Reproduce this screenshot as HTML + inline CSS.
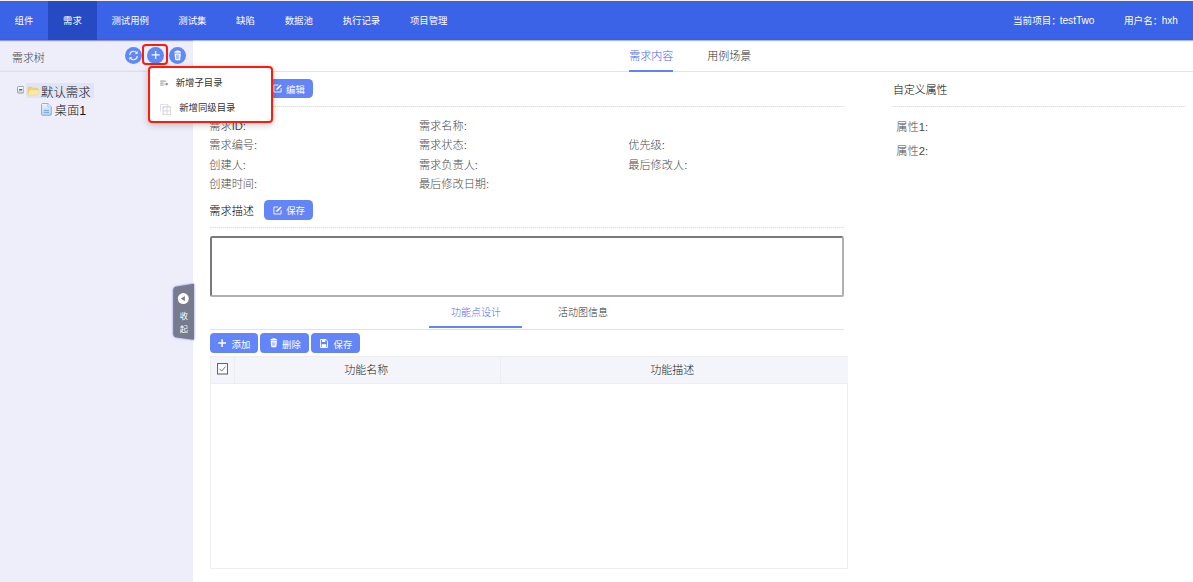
<!DOCTYPE html>
<html lang="zh-CN">
<head>
<meta charset="utf-8">
<title>需求</title>
<style>
*{box-sizing:border-box;margin:0;padding:0}
html,body{width:1193px;height:582px;overflow:hidden;background:#fff}
body{font-family:"Liberation Sans","Noto Sans CJK SC",sans-serif;color:#333;position:relative}
.abs{position:absolute}
.t{position:absolute;white-space:nowrap;line-height:1;transform:translateY(-50%)}
/* top strip + header */
#strip{left:0;top:0;width:1193px;height:1px;background:#f5f0e2}
#hdr{left:0;top:1px;width:1193px;height:39px;background:linear-gradient(#3b63e7 0,#3b63e7 37.9px,#355de6 38px)}
#hdr .nav{position:absolute;top:0;height:39px;color:#fff;font-size:9.4px;line-height:39px;text-align:center}
#hdr .act{background:#2649c4}
#hdr .r{position:absolute;top:0;height:39px;line-height:39px;color:#fff;font-size:9.6px;white-space:nowrap}
/* sidebar */
#side{left:0;top:40px;width:193px;height:542px;background:#eeeefa}
#sideline{left:0;top:70px;width:193px;height:2px;background:linear-gradient(#e8e8f2 0,#e8e8f2 50%,#dfdfe7 50%)}
.cbtn{position:absolute;width:17px;height:17px;border-radius:50%;background:#6088f8}
/* main */
#tabline{left:193px;top:71px;width:1000px;height:1px;background:#e4e4e4}
.dot{position:absolute;height:1px;background:#f3f3f3}.dot::after{content:"";position:absolute;left:0;right:0;top:0;height:0;border-top:1px dotted #dcdcdc}
.lbl{color:#4a4a4a;font-size:11.2px;font-weight:300}
.btn{position:absolute;background:#6485f8;border-radius:3px;color:#fff;font-size:9.4px}
</style>
</head>
<body>
<div id="strip" class="abs"></div>
<div id="hdr" class="abs">
  <div class="nav" style="left:0;width:48px">组件</div>
  <div class="nav act" style="left:48px;width:49px">需求</div>
  <div class="nav" style="left:96.5px;width:67.5px">测试用例</div>
  <div class="nav" style="left:163.4px;width:58px">测试集</div>
  <div class="nav" style="left:221.2px;width:48.5px">缺陷</div>
  <div class="nav" style="left:269.8px;width:58px">数据池</div>
  <div class="nav" style="left:327.7px;width:67.5px">执行记录</div>
  <div class="nav" style="left:395px;width:67.5px">项目管理</div>
  <div class="r" style="left:1013px">当前项目：<span style="font-size:10.1px;margin-left:-1.3px">testTwo</span></div>
  <div class="r" style="left:1124px">用户名：<span style="font-size:10px;margin-left:-.6px">hxh</span></div>
</div>

<div id="side" class="abs"></div>
<div id="sideline" class="abs"></div>
<div class="abs" style="left:0;top:40px;width:193px;height:1px;background:#8d97cb"></div>
<div class="abs" style="left:193px;top:40px;width:1000px;height:1px;background:#a9b5e7"></div>
<div class="abs" style="left:0;top:41px;width:193px;height:1px;background:#dcdce8"></div>
<div class="abs" style="left:193px;top:41px;width:1000px;height:1px;background:#f6f5f1"></div>

<div class="t" style="left:12px;top:57.8px;font-size:10.9px;color:#444;font-weight:300">需求树</div>


<!-- sidebar toolbar icons -->
<div class="cbtn" style="left:124.7px;top:46.800px">
  <svg width="17" height="17" viewBox="0 0 17 17" style="position:absolute;left:0;top:0">
    <path d="M4.700 8.100a3.900 3.900 0 0 1 7-2.200" fill="none" stroke="#fff" stroke-width="1.100"/>
    <path d="M12.300 8.900a3.900 3.900 0 0 1-7 2.200" fill="none" stroke="#fff" stroke-width="1.100"/>
    <path d="M12.600 3.900v2.800H9.800z" fill="#fff"/>
    <path d="M4.400 13.100v-2.800h2.800z" fill="#fff"/>
  </svg>
</div>
<div class="cbtn" style="left:146.800px;top:46.800px">
  <svg width="17" height="17" viewBox="0 0 17 17" style="position:absolute;left:0;top:0">
    <path d="M8.700 3.900v8M4.700 7.900h8" stroke="#fff" stroke-width="1.150" fill="none"/>
  </svg>
</div>
<div class="cbtn" style="left:168.900px;top:46.800px;width:17.200px">
  <svg width="17.200" height="17" viewBox="0 0 17.200 17" style="position:absolute;left:0;top:0">
    <path d="M5.300 5.800C5.300 4.600 6.600 3.500 8.700 3.500s3.400 1.100 3.400 2.300z" fill="#fff"/>
    <path d="M5.600 6.400h6.200l-.5 6.200a.8.800 0 0 1-.8.700H6.900a.8.800 0 0 1-.8-.7z" fill="#fff"/>
    <path d="M7.600 7.600v4.400M8.700 7.600v4.400M9.800 7.600v4.400" stroke="#6088f8" stroke-width=".6"/>
  </svg>
</div>
<!-- red highlight around plus -->
<div class="abs" style="left:141.9px;top:43.7px;width:26.3px;height:21.8px;border:2.5px solid #fd1c0c;border-radius:4px"></div>

<!-- tree -->
<div class="abs" style="left:25.8px;top:82.8px;width:68px;height:15px;background:#e1e4f6"></div>
<svg class="abs" style="left:17px;top:86.4px" width="7.4" height="7.6" viewBox="0 0 7.4 7.6">
  <defs><linearGradient id="gm" x1="0" y1="0" x2="0" y2="1"><stop offset="0" stop-color="#fdfdfd"/><stop offset="1" stop-color="#cfd3da"/></linearGradient></defs>
  <rect x=".5" y=".5" width="6.4" height="6.6" rx="1" fill="url(#gm)" stroke="#8c9cb3" stroke-width=".9"/>
  <path d="M2.2 3.8h3" stroke="#333" stroke-width="1.1"/>
</svg>
<svg class="abs" style="left:27.3px;top:86.2px" width="12.6" height="9.8" viewBox="0 0 12.6 9.8">
  <path d="M1 2.2a1 1 0 0 1 1-1h2.6l1 1h4.6a1 1 0 0 1 1 1v1H3.4L1 8.8z" fill="#f3d36c" stroke="#e6c35a" stroke-width=".5"/>
  <path d="M3.2 4h8.4a.7.7 0 0 1 .7.9L11 8.700a.9.900 0 0 1-.9.600H1.500a.6.600 0 0 1-.5-.8L2.400 4.600a.9.900 0 0 1 .8-.6z" fill="#fbe9a0" stroke="#edd47c" stroke-width=".5"/>
</svg>
<div class="t" style="left:41px;top:92.5px;font-size:12.4px;color:#151515;font-weight:300">默认需求</div>
<svg class="abs" style="left:41px;top:103.2px" width="10.8" height="12.8" viewBox="0 0 10.8 12.800">
  <defs><linearGradient id="gd" x1="0" y1="0" x2="0" y2="1"><stop offset="0" stop-color="#eef5fd"/><stop offset="1" stop-color="#b5d1f4"/></linearGradient></defs>
  <path d="M1.500.5h5.400l3.400 3.400v7.400a1 1 0 0 1-1 1H1.500a1 1 0 0 1-1-1V1.500a1 1 0 0 1 1-1z" fill="url(#gd)" stroke="#7ea9e2" stroke-width=".9"/>
  <path d="M6.900.7v3.200h3.200" fill="#f4f9ff" stroke="#7ea9e2" stroke-width=".6"/>
  <path d="M2.800 7.400h5.200M2.800 9.400h5.200" stroke="#6d9ddb" stroke-width=".9"/>
</svg>
<div class="t" style="left:54.6px;top:111.3px;font-size:12.4px;color:#151515;font-weight:300">桌面1</div>

<div id="tabline" class="abs"></div>

<!-- main tabs -->
<div class="t" style="left:629.2px;top:55.8px;font-size:11px;color:#4366ee;font-weight:300">需求内容</div>
<div class="abs" style="left:629px;top:69.5px;width:44px;height:2px;background:#6283f7"></div>
<div class="t" style="left:707.3px;top:55.8px;font-size:11px;color:#2e2e2e;font-weight:300">用例场景</div>

<!-- section 1 -->
<div class="t" style="left:209.3px;top:89.5px;font-size:11.2px;color:#111;font-weight:300">需求信息</div>
<div class="btn" style="left:264px;top:78.9px;width:48.5px;height:19.3px;border-radius:4.5px"></div>
<svg class="abs" style="left:272.6px;top:84.2px" width="9" height="9" viewBox="0 0 9 9">
  <path d="M5.200 1H.9v7h7.200V4.200" fill="none" stroke="#fff" stroke-width=".9"/>
  <path d="M3.200 6l.5-1.700L7.500.4l1.100 1.100-3.800 4z" fill="#fff"/>
</svg>
<div class="t" style="left:286px;top:89.9px;font-size:9.4px;color:#fff">编辑</div>
<div class="dot" style="left:210px;top:106px;width:634px"></div>

<div class="t lbl" style="left:209.3px;top:126.5px">需求ID:</div>
<div class="t lbl" style="left:418.9px;top:126.5px">需求名称:</div>
<div class="t lbl" style="left:209.3px;top:145.5px">需求编号:</div>
<div class="t lbl" style="left:418.9px;top:145.5px">需求状态:</div>
<div class="t lbl" style="left:628.2px;top:145.5px">优先级:</div>
<div class="t lbl" style="left:209.3px;top:166.2px">创建人:</div>
<div class="t lbl" style="left:418.9px;top:166.2px">需求负责人:</div>
<div class="t lbl" style="left:628.2px;top:166.2px">最后修改人:</div>
<div class="t lbl" style="left:209.3px;top:185.2px">创建时间:</div>
<div class="t lbl" style="left:418.9px;top:185.2px">最后修改日期:</div>

<!-- section 2 -->
<div class="t" style="left:209.3px;top:211.8px;font-size:11.2px;color:#000;font-weight:300">需求描述</div>
<div class="btn" style="left:264px;top:200px;width:48.5px;height:19.6px;border-radius:4.5px"></div>
<svg class="abs" style="left:272.6px;top:205.6px" width="9" height="9" viewBox="0 0 9 9">
  <path d="M5.200 1H.9v7h7.200V4.200" fill="none" stroke="#fff" stroke-width=".9"/>
  <path d="M3.200 6l.5-1.700L7.500.4l1.100 1.100-3.800 4z" fill="#fff"/>
</svg>
<div class="t" style="left:286.2px;top:211.3px;font-size:9.4px;color:#fff">保存</div>
<div class="dot" style="left:210px;top:226.600px;width:634px"></div>

<div class="abs" style="left:210px;top:236px;width:634px;height:61px;border:2px solid #797979;border-right-color:#b0b0b0;border-bottom-color:#b0b0b0;border-radius:2.5px;background:#fff"></div>

<!-- tabs 2 -->
<div class="t" style="left:450.9px;top:312.9px;font-size:10px;color:#4a6df2;font-weight:300">功能点设计</div>
<div class="abs" style="left:429px;top:326px;width:93px;height:2px;background:#6484f7"></div>
<div class="t" style="left:558px;top:312.9px;font-size:10px;color:#2e2e2e;font-weight:300">活动图信息</div>
<div class="abs" style="left:210px;top:328.5px;width:634px;height:1px;background:#e2e2e2"></div>

<!-- action buttons -->
<div class="btn" style="left:210px;top:333.2px;width:47.8px;height:19.8px;border-radius:4px"></div>
<div class="btn" style="left:260.2px;top:333.2px;width:48.6px;height:19.8px;border-radius:4px"></div>
<div class="btn" style="left:311.2px;top:333.2px;width:48.6px;height:19.8px;border-radius:4px"></div>
<svg class="abs" style="left:218.1px;top:339.2px" width="8.2" height="8.2" viewBox="0 0 8.2 8.2"><path d="M4.1 .2v7.800M.2 4.100h7.800" stroke="#fff" stroke-width="1.5"/></svg>
<div class="t" style="left:231.5px;top:344.6px;font-size:9.4px;color:#fff">添加</div>
<svg class="abs" style="left:270px;top:338.400px" width="7.600" height="9.400" viewBox="0 0 7.600 9.400">
  <path d="M.3 2.500C.3 1.300 1.700.3 3.800.3s3.500 1 3.500 2.200z" fill="#fff"/>
  <path d="M.7 3.100h6.200l-.5 5.400a.8.800 0 0 1-.8.700H2a.8.800 0 0 1-.8-.7z" fill="#fff"/>
  <path d="M2.700 4.200v3.600M3.800 4.200v3.600M4.900 4.200v3.600" stroke="#6485f8" stroke-width=".55"/>
</svg>
<div class="t" style="left:282px;top:344.6px;font-size:9.4px;color:#fff">删除</div>
<svg class="abs" style="left:320px;top:339.200px" width="8" height="9" viewBox="0 0 8 9">
  <path d="M.5.500h5.600l1.400 1.400v6.600H.5z" fill="none" stroke="#fff" stroke-width=".9"/>
  <path d="M2 .6v2.400h3.400V.6" fill="#fff"/>
  <path d="M1.700 5.200h4.600v3H1.700z" fill="#fff"/>
</svg>
<div class="t" style="left:333.5px;top:344.6px;font-size:9.4px;color:#fff">保存</div>

<!-- table -->
<div class="abs" style="left:210px;top:356px;width:638px;height:213px;border:1px solid #eeeeee;background:#fff"></div>
<div class="abs" style="left:210.5px;top:356.5px;width:637px;height:27px;background:#f4f5fa;border-bottom:1px solid #eeeef2"></div>
<div class="abs" style="left:234.3px;top:357px;width:1px;height:26.5px;background:#ececf1"></div>
<div class="abs" style="left:499.6px;top:357px;width:1px;height:26.5px;background:#ececf1"></div>
<svg class="abs" style="left:217.3px;top:363px" width="11" height="11.5" viewBox="0 0 11 11.5">
  <rect x=".5" y=".5" width="10" height="10.500" fill="#fff" stroke="#666" stroke-width="1.1"/>
  <path d="M2.6 5.8l2.1 2.3 3.9-4.6" fill="none" stroke="#666" stroke-width=".9"/>
</svg>
<div class="t" style="left:366.2px;top:370px;font-size:11px;color:#222;font-weight:300;transform:translate(-50%,-50%)">功能名称</div>
<div class="t" style="left:672.3px;top:370px;font-size:11px;color:#222;font-weight:300;transform:translate(-50%,-50%)">功能描述</div>

<!-- right panel -->
<div class="t" style="left:893px;top:89.9px;font-size:10.9px;color:#000;font-weight:300">自定义属性</div>
<div class="dot" style="left:893px;top:105.7px;width:293px"></div>
<div class="t lbl" style="left:896.3px;top:127.6px">属性1:</div>
<div class="t lbl" style="left:896.3px;top:151.7px">属性2:</div>

<!-- collapse handle -->
<svg class="abs" style="left:171px;top:281px;filter:drop-shadow(.6px .7px .9px rgba(95,95,245,.85))" width="25" height="62" viewBox="0 0 25 62">
  <path d="M23 2.800v56L6.200 56.600a4 4 0 0 1-4-4V9.400a4 4 0 0 1 4-4z" fill="#787a8e"/>
  <circle cx="12.300" cy="17.600" r="5.500" fill="#fff"/>
  <path d="M13.900 15v5.200l-4-2.600z" fill="#787a8e"/>
</svg>
<div class="t" style="left:183.800px;top:316px;font-size:8.300px;color:#fff;transform:translate(-50%,-50%)">收</div>
<div class="t" style="left:183.800px;top:328.900px;font-size:8.300px;color:#fff;transform:translate(-50%,-50%)">起</div>

<!-- dropdown -->
<div class="abs" style="left:148px;top:66.200px;width:125.200px;height:56.900px;background:#fff;border:2.600px solid #fd1c0c;border-radius:4px;box-shadow:0 2px 7px rgba(0,0,0,.22)"></div>
<svg class="abs" style="left:160px;top:79.600px" width="9" height="7" viewBox="0 0 9 7">
  <path d="M.2 1.100h5.600M.2 3.100h3.400M.2 5.100h3.400" stroke="#858585" stroke-width=".9"/>
  <path d="M4.400 4.100h2.200" stroke="#858585" stroke-width=".9"/><path d="M6.100 2.500l2.300 1.600-2.300 1.600z" fill="#858585"/>
</svg>
<div class="t" style="left:175.700px;top:82.900px;font-size:9.400px;color:#333">新增子目录</div>
<svg class="abs" style="left:160px;top:103.500px" width="11.400" height="11.400" viewBox="0 0 11.400 11.400">
  <path d="M.4 7.600V.4h7.400v2.400" fill="none" stroke="#cfcfee" stroke-width=".7"/>
  <rect x="3.100" y="2.900" width="7.800" height="8" fill="#fff" stroke="#b9b9b9" stroke-width=".7"/>
  <path d="M7 3.100v7.600M3.300 6.900h7.400" stroke="#c2c2c2" stroke-width=".6"/>
</svg>
<div class="t" style="left:179.200px;top:108.400px;font-size:9.400px;color:#333">新增同级目录</div>

</body>
</html>
